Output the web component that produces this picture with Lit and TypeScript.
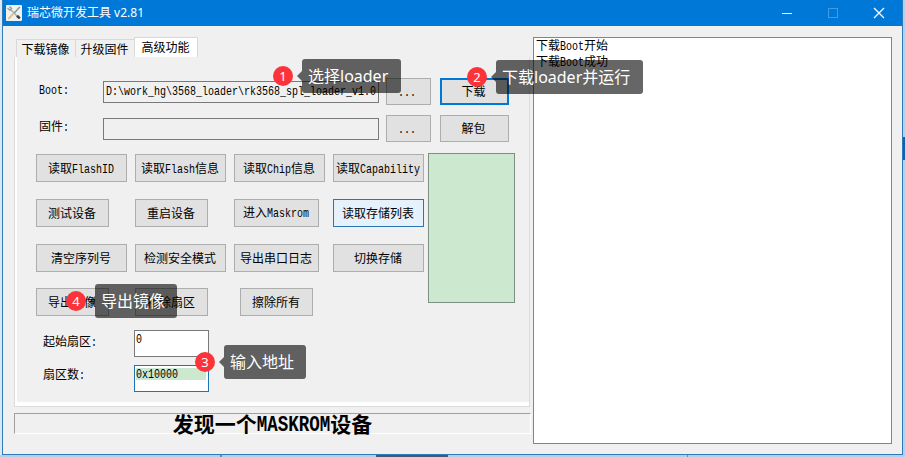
import { LitElement, html, css, svg } from "lit";
import { customElement, property } from "lit/decorators.js";

/** Splits a caption so that Latin runs get half-width cells beside full-width Han glyphs. */
const mixed = (text: string) =>
  text
    .split(/([\x20-\x7e]+)/)
    .filter(Boolean)
    .map((part) => (/^[\x20-\x7e]/.test(part) ? html`<span class="latin">${part}</span>` : part));

const latinCells = css`
  .latin {
    display: inline-block;
    font-family: "Liberation Mono", monospace;
    font-size: 10px;
    line-height: 12px;
    white-space: pre;
    transform: scaleY(1.22);
    transform-origin: 0 80%;
  }
`;

@customElement("tool-button")
class ToolButton extends LitElement {
  @property() label = "";
  static styles = [
    latinCells,
    css`
      :host {
        box-sizing: border-box;
        display: flex;
        align-items: center;
        justify-content: center;
        height: 28px;
        padding-right: 1px;
        border: 1px solid #adadad;
        background: #e1e1e1;
        white-space: nowrap;
      }
      :host(.small) { width: 73px; }
      :host(.medium) { width: 85px; }
      :host(.wide) { width: 91px; }
      :host(.indent) { margin-left: 6px; }
      :host(.browse) { width: 45px; height: 27px; padding-right: 3px; }
      :host(.action) { width: 69px; height: 27px; padding: 0 2px 2px 0; }
      :host(.default) { border: 2px solid #0078d7; }
      :host(.hover) { border-color: #2a76b8; background: #e5f1fb; }
    `,
  ];
  render() {
    return html`<span>${mixed(this.label)}</span>`;
  }
}

@customElement("step-note")
class StepNote extends LitElement {
  @property({ type: Number }) step = 1;
  @property() text = "";
  static styles = css`
    :host {
      display: flex;
      align-items: center;
      font: 16px/34px "Noto Sans", "Noto Sans CJK SC", sans-serif;
      color: #fff;
      white-space: nowrap;
    }
    .badge {
      width: 20px;
      height: 20px;
      border-radius: 50%;
      background: #fa3438;
      font-size: 13px;
      line-height: 20px;
      text-align: center;
    }
    .arrow {
      margin-left: 4px;
      border: solid transparent;
      border-width: 5px 5px 5px 0;
      border-right-color: rgba(0, 0, 0, 0.6);
    }
    .bubble {
      box-sizing: border-box;
      height: 34px;
      padding: 0 12px 0 6px;
      border-radius: 3px;
      background: rgba(0, 0, 0, 0.6);
    }
    :host(.roomy) .bubble { padding-right: 13px; }
  `;
  render() {
    return html`<div class="badge">${this.step}</div>
      <div class="arrow"></div>
      <div class="bubble">${this.text}</div>`;
  }
}

type Item = [label: string, classes: string];
const commands: Item[] = [
  ["读取FlashID", "wide"],
  ["读取Flash信息", "wide"],
  ["读取Chip信息", "wide"],
  ["读取Capability", "wide"],
  ["测试设备", "small"],
  ["重启设备", "small"],
  ["进入Maskrom", "medium"],
  ["读取存储列表", "wide hover"],
  ["清空序列号", "wide"],
  ["检测安全模式", "wide"],
  ["导出串口日志", "medium"],
  ["切换存储", "wide"],
  ["导出镜像", "small"],
  ["擦除扇区", "small"],
  ["擦除所有", "small indent"],
];

@customElement("app-root")
class AppRoot extends LitElement {
  static styles = [
    latinCells,
    css`
      :host {
        box-sizing: border-box;
        position: relative;
        display: block;
        height: 457px;
        padding: 0 2px 2px;
        overflow: hidden;
        font: 12px/16px "Noto Sans CJK SC", sans-serif;
        color: #000;
        background:
          linear-gradient(#0c63b5, #0c63b5) right 137px / 2px 23px no-repeat,
          linear-gradient(#45586d, #45586d) 376px bottom / 72px 2px no-repeat,
          linear-gradient(#6e8ba6, #6e8ba6) 220px bottom / 2px 2px no-repeat,
          linear-gradient(#6e8ba6, #6e8ba6) 687px bottom / 1px 2px no-repeat,
          linear-gradient(#dce9f4, #dce9f4) left top / 2px 455px no-repeat,
          #b4cfe6;
      }
      .window {
        box-sizing: border-box;
        height: 455px;
        border: solid #2f7ab8;
        border-width: 0 1px 1px;
        background: #f0f0f0;
      }
      .titlebar {
        display: flex;
        align-items: center;
        height: 26px;
        padding: 0 17px 0 3px;
        background: #0078d7;
        color: #fff;
        font-family: "Noto Sans", "Noto Sans CJK SC", sans-serif;
      }
      .title { flex: 1; margin-left: 5px; }
      .titlebar svg { display: block; }
      .controls { display: flex; gap: 34px; }
      .content {
        display: flex;
        gap: 2px;
        padding: 11px 0 0 11px;
      }
      .left { width: 517px; }
      .tabs { display: flex; align-items: flex-end; height: 20px; padding-left: 2px; }
      .tab {
        box-sizing: border-box;
        width: 59px;
        height: 18px;
        padding-right: 1px;
        border: 1px solid #d9d9d9;
        border-bottom: 0;
        border-right: 0;
        text-align: center;
        line-height: 17px;
        white-space: nowrap;
      }
      .tab.active {
        width: 64px;
        height: 20px;
        border-right: 1px solid #d9d9d9;
        background: #fff;
      }
      .panel {
        box-sizing: border-box;
        height: 350px;
        margin-right: 1px;
        padding: 21px 0 0 19px;
        border: solid #dcdcdc;
        border-width: 0 1px 1px;
        box-shadow: inset 2px 0 #fff, inset 0 -4px #fff;
      }
      .file { display: flex; align-items: center; height: 27px; margin-left: 5px; }
      .file + .file { margin-top: 10px; }
      .file .name { width: 64px; height: 21px; }
      .path {
        box-sizing: border-box;
        width: 276px;
        height: 22px;
        margin-right: 7px;
        padding-left: 2px;
        border: 1px solid #7a7a7a;
        line-height: 15px;
        overflow: hidden;
        white-space: nowrap;
      }
      .file .action { margin-left: 9px; }
      .commands { display: flex; margin: 11px 0 0 2px; }
      .grid {
        display: grid;
        grid-template-columns: repeat(4, 99px);
        grid-template-rows: 28px 28px 28px 28px;
        row-gap: 16.8px;
        margin-top: 1px;
      }
      .preview {
        box-sizing: border-box;
        width: 87px;
        height: 150px;
        margin-left: -4px;
        border: 1px solid #7b8f85;
        background: #cce8cf;
      }
      .sector { display: flex; height: 27px; margin: 14px 0 0 9px; }
      .sector + .sector { margin-top: 8px; }
      .sector .name { width: 91px; line-height: 22px; }
      .sector + .sector .name { line-height: 18px; }
      .field {
        box-sizing: border-box;
        width: 75px;
        border: 1px solid #7a7a7a;
        background: #fff;
        padding: 2px 2px 2px 1px;
      }
      .field.focus { border-color: #1f74b5; }
      .value { height: 12px; line-height: 10px; }
      .focus .value { background: #cce8cf; }
      .status {
        box-sizing: border-box;
        display: flex;
        align-items: center;
        justify-content: center;
        height: 21px;
        margin-top: 6px;
        padding-bottom: 2px;
        border: 1px solid #a0a0a0;
        border-right-color: #fff;
        border-bottom-color: #fff;
        font-size: 21px;
        font-weight: bold;
        white-space: nowrap;
      }
      .chip {
        margin-top: 4px;
        font: bold 17.5px/20px "Liberation Mono", monospace;
        transform: scaleY(1.25);
      }
      .log {
        box-sizing: border-box;
        width: 359px;
        height: 407px;
        padding: 0 2px;
        border: 1px solid #7f8683;
        background: #fff;
      }
      .log div { height: 16px; line-height: 14px; }
      step-note { position: absolute; }
      .note1 { left: 273px; top: 59px; }
      .note2 { left: 467px; top: 60px; }
      .note3 { left: 195px; top: 345px; }
      .note4 { left: 66px; top: 284px; }
    `,
  ];

  private appIcon() {
    return svg`<svg width="16" height="16" viewBox="0 0 16 16" fill="none">
      <rect width="16" height="16" rx="1" fill="#f1f2ee" />
      <path d="M4.5 4.5 12 12" stroke="#aab0b2" stroke-width="1.4" />
      <path d="M1.5 3 4 5.2 5.6 3.6 3.4 1.4" stroke="#969da0" stroke-width="1.4" />
      <path d="m11 10.8 2.8 2.6" stroke="#36434b" stroke-width="2.6" />
      <path d="M13.8 2 8 8.2" stroke="#8d9697" stroke-width="1.5" />
      <path d="M7.4 8.6 2.4 13.8" stroke="#e2bd78" stroke-width="1.8" />
    </svg>`;
  }

  private controls() {
    return html`<div class="controls">
      <svg width="12" height="12"><path d="M1 6.5h10" stroke="#fff" /></svg>
      <svg width="12" height="12"><rect x="1.5" y="1.5" width="9" height="9" fill="none" stroke="#3f9be8" /></svg>
      <svg width="12" height="12"><path d="m1 1 10 10M11 1 1 11" stroke="#fff" stroke-width="1.3" /></svg>
    </div>`;
  }

  private file(name: string, path: string, action: string, extra = "") {
    return html`<div class="file">
      <span class="name">${mixed(name)}</span>
      <div class="path">${mixed(path)}</div>
      <tool-button class="browse" label="..."></tool-button>
      <tool-button class="action ${extra}" label=${action}></tool-button>
    </div>`;
  }

  render() {
    return html`
      <div class="window">
        <div class="titlebar">
          ${this.appIcon()}
          <span class="title">瑞芯微开发工具 v2.81</span>
          ${this.controls()}
        </div>
        <div class="content">
          <div class="left">
            <div class="tabs">
              <div class="tab">下载镜像</div>
              <div class="tab">升级固件</div>
              <div class="tab active">高级功能</div>
            </div>
            <div class="panel">
              ${this.file("Boot:", "D:\\work_hg\\3568_loader\\rk3568_spl_loader_v1.0", "下载", "default")}
              ${this.file("固件:", "", "解包")}
              <div class="commands">
                <div class="grid">
                  ${commands.map(([label, cls]) => html`<tool-button class=${cls} label=${label}></tool-button>`)}
                </div>
                <div class="preview"></div>
              </div>
              <div class="sector">
                <span class="name">${mixed("起始扇区:")}</span>
                <div class="field"><div class="value">${mixed("0")}</div></div>
              </div>
              <div class="sector">
                <span class="name">${mixed("扇区数:")}</span>
                <div class="field focus"><div class="value">${mixed("0x10000")}</div></div>
              </div>
            </div>
            <div class="status">发现一个<span class="chip">MASKROM</span>设备</div>
          </div>
          <div class="log">
            <div>${mixed("下载Boot开始")}</div>
            <div>${mixed("下载Boot成功")}</div>
          </div>
        </div>
      </div>
      <step-note class="note1 roomy" step="1" text="选择loader"></step-note>
      <step-note class="note2 roomy" step="2" text="下载loader并运行"></step-note>
      <step-note class="note3" step="3" text="输入地址"></step-note>
      <step-note class="note4" step="4" text="导出镜像"></step-note>
    `;
  }
}
